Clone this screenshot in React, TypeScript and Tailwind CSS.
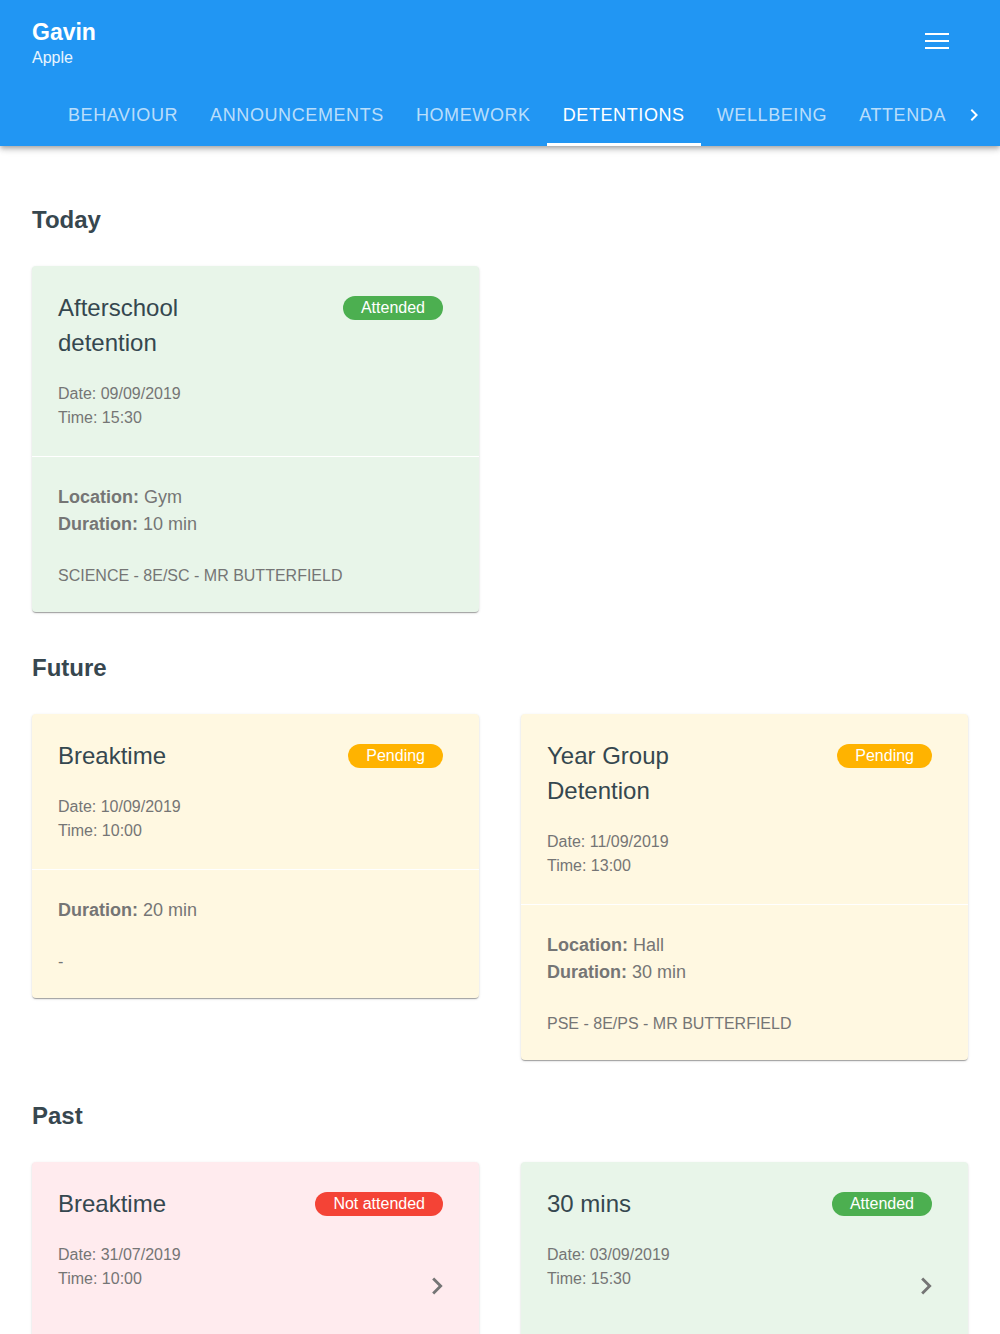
import React from 'react'

type Status = 'attended' | 'pending' | 'missed'

type Detention = {
  title: string
  status: Status
  date: string
  time: string
  location?: string
  duration?: string
  subject?: string
  past?: boolean
}

const cardBg: Record<Status, string> = {
  attended: 'bg-[#e8f5e9]',
  pending: 'bg-[#fff8e1]',
  missed: 'bg-[#ffebee]',
}

const badgeBg: Record<Status, string> = {
  attended: 'bg-[#4caf50]',
  pending: 'bg-[#ffb300]',
  missed: 'bg-[#f44336]',
}

const badgeText: Record<Status, string> = {
  attended: 'Attended',
  pending: 'Pending',
  missed: 'Not attended',
}

const tabs = ['BEHAVIOUR', 'ANNOUNCEMENTS', 'HOMEWORK', 'DETENTIONS', 'WELLBEING', 'ATTENDANCE']

function ArrowRight({ size = 24, className = '' }: { size?: number; className?: string }) {
  return (
    <svg width={size} height={size} viewBox="0 0 24 24" className={className} fill="currentColor">
      <path d="M8.59 16.59L13.17 12 8.59 7.41 10 6l6 6-6 6-1.41-1.41z" />
    </svg>
  )
}

function Header() {
  return (
    <header className="bg-[#2196f3] text-white shadow-[0_2px_4px_-1px_rgba(0,0,0,0.2),0_4px_5px_0_rgba(0,0,0,0.14),0_1px_10px_0_rgba(0,0,0,0.12)] relative z-10">
      <div className="h-[84px] flex items-start justify-between pl-8 pr-[51px]">
        <div className="pt-[18px]">
          <p className="text-[23px] leading-[28px] font-bold">Gavin</p>
          <p className="text-[16px] leading-[20px] mt-[2px] text-white/90">Apple</p>
        </div>
        <div className="mt-[33px] flex flex-col gap-[5px] w-6">
          <span className="h-[2px] bg-white block" />
          <span className="h-[2px] bg-white block" />
          <span className="h-[2px] bg-white block" />
        </div>
      </div>
      <div className="h-[62px] flex">
        <div className="w-[52px] shrink-0" />
        <div className="flex-1 flex overflow-hidden">
          {tabs.map((t) => (
            <div
              key={t}
              className={
                'relative h-full px-4 flex items-center text-[18px] tracking-[0.6px] whitespace-nowrap ' +
                (t === 'DETENTIONS' ? 'text-white' : 'text-white/70')
              }
            >
              {t}
              {t === 'DETENTIONS' && <span className="absolute left-0 right-0 bottom-0 h-[3px] bg-white" />}
            </div>
          ))}
        </div>
        <div className="w-[53px] shrink-0 flex items-center justify-center">
          <ArrowRight size={24} className="text-white" />
        </div>
      </div>
    </header>
  )
}

function Card({ d }: { d: Detention }) {
  const hasLower = !d.past
  return (
    <div
      className={
        cardBg[d.status] +
        ' rounded-[4px] shadow-[0_2px_1px_-1px_rgba(0,0,0,0.2),0_1px_1px_0_rgba(0,0,0,0.14),0_1px_3px_0_rgba(0,0,0,0.12)] overflow-hidden'
      }
    >
      <div className={'pt-6 pl-[26px] pr-[36px] ' + (d.past ? 'pb-[60px]' : 'pb-[26px]')}>
        <div className="flex items-start justify-between">
          <h3 className="w-1/2 text-[24px] leading-[35px] text-[#35474f]">{d.title}</h3>
          <span
            className={
              badgeBg[d.status] + ' mt-[6px] h-6 px-[18px] rounded-full text-white text-[16px] leading-6 whitespace-nowrap'
            }
          >
            {badgeText[d.status]}
          </span>
        </div>
        <div className="mt-[22px] flex items-end justify-between">
          <div className="text-[16px] leading-6 text-[#757575]">
            <p>Date: {d.date}</p>
            <p>Time: {d.time}</p>
          </div>
          {d.past && <ArrowRight size={34} className="text-[#757575] mb-[-12px] mr-[-11px]" />}
        </div>
      </div>
      {hasLower && (
        <>
          <div className="h-px bg-white" />
          <div className="pt-[27px] pb-[24px] pl-[26px] pr-[36px] text-[#757575]">
            <div className="text-[18px] leading-[27px]">
              {d.location && (
                <p>
                  <span className="font-bold">Location:</span> {d.location}
                </p>
              )}
              {d.duration && (
                <p>
                  <span className="font-bold">Duration:</span> {d.duration}
                </p>
              )}
            </div>
            <p className="mt-[26px] text-[16px] leading-6">{d.subject}</p>
          </div>
        </>
      )}
    </div>
  )
}

function Section({ title, items, first }: { title: string; items: Detention[]; first?: boolean }) {
  return (
    <section className={first ? 'mt-[58px]' : 'mt-10'}>
      <h2 className="text-[24px] leading-8 font-bold text-[#37474f]">{title}</h2>
      <div className="mt-[30px] grid grid-cols-2 gap-x-[42px] gap-y-6 items-start">
        {items.map((d, i) => (
          <Card key={i} d={d} />
        ))}
      </div>
    </section>
  )
}

export default function App() {
  const today: Detention[] = [
    {
      title: 'Afterschool detention',
      status: 'attended',
      date: '09/09/2019',
      time: '15:30',
      location: 'Gym',
      duration: '10 min',
      subject: 'SCIENCE - 8E/SC - MR BUTTERFIELD',
    },
  ]
  const future: Detention[] = [
    { title: 'Breaktime', status: 'pending', date: '10/09/2019', time: '10:00', duration: '20 min', subject: '-' },
    {
      title: 'Year Group Detention',
      status: 'pending',
      date: '11/09/2019',
      time: '13:00',
      location: 'Hall',
      duration: '30 min',
      subject: 'PSE - 8E/PS - MR BUTTERFIELD',
    },
  ]
  const past: Detention[] = [
    { title: 'Breaktime', status: 'missed', date: '31/07/2019', time: '10:00', past: true },
    { title: '30 mins', status: 'attended', date: '03/09/2019', time: '15:30', past: true },
  ]

  return (
    <div className="min-h-screen bg-white font-['Liberation_Sans',Arial,sans-serif]">
      <Header />
      <main className="px-8 pb-10">
        <Section title="Today" items={today} first />
        <Section title="Future" items={future} />
        <Section title="Past" items={past} />
      </main>
    </div>
  )
}
